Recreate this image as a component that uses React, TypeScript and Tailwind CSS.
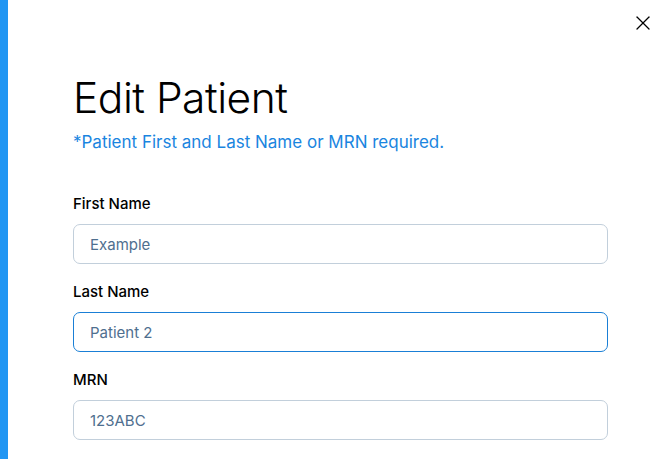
import { X } from "lucide-react";

const fields = [
  { label: "First Name", value: "Example", focused: false },
  { label: "Last Name", value: "Patient 2", focused: true },
  { label: "MRN", value: "123ABC", focused: false },
];

export default function App() {
  return (
    <div
      className="flex h-[459px] w-[670px] overflow-hidden bg-white"
      style={{ fontFamily: "Inter, 'Noto Sans', sans-serif" }}
    >
      <div className="w-2 shrink-0 bg-[#2196f3]" />
      <div className="relative flex-1 pl-[65px] pr-[62px] pt-[70px]">
        <button type="button" className="absolute right-[15px] top-[11px] text-black">
          <X size={24} strokeWidth={1.3} />
        </button>
        <h1 className="text-[42.5px] font-light leading-[56px] tracking-[-0.5px] text-black">Edit Patient</h1>
        <p className="mt-[4px] text-[17px] font-normal leading-6 text-[#1a85e0]">
          *Patient First and Last Name or MRN required.
        </p>
        <div className="mt-[40px] flex flex-col gap-[18px]">
          {fields.map((f) => (
            <label key={f.label} className="flex flex-col gap-[10px]">
              <span className="text-[15px] font-medium leading-5 text-black">{f.label}</span>
              <input
                defaultValue={f.value}
                className={
                  "h-10 w-full rounded-[7px] border bg-white px-4 text-[15px] text-[#4f6f8f] outline-none " +
                  (f.focused ? "border-[#1a7fd6]" : "border-[#c2cfdb]")
                }
              />
            </label>
          ))}
        </div>
      </div>
    </div>
  );
}
